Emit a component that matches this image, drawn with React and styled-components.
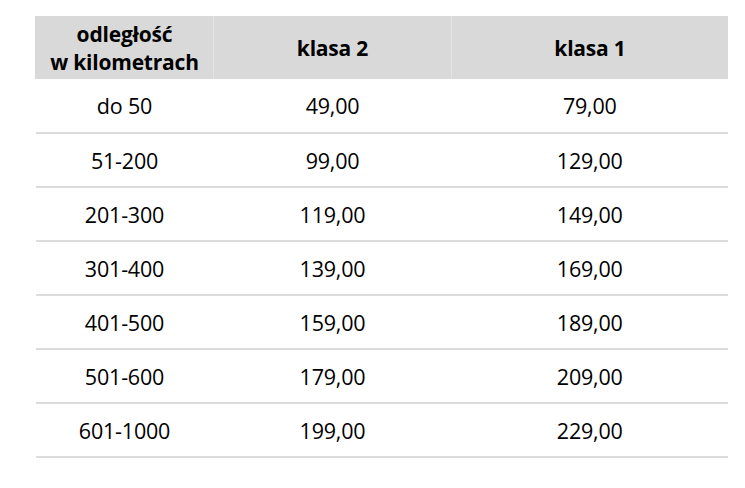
import React from 'react';
import styled, { createGlobalStyle } from 'styled-components';

const GlobalStyle = createGlobalStyle`
  body {
    margin: 0;
    background: #ffffff;
    font-family: "Open Sans", "Noto Sans", sans-serif;
  }
`;

const rows = [
  ['do 50', '49,00', '79,00'],
  ['51-200', '99,00', '129,00'],
  ['201-300', '119,00', '149,00'],
  ['301-400', '139,00', '169,00'],
  ['401-500', '159,00', '189,00'],
  ['501-600', '179,00', '209,00'],
  ['601-1000', '199,00', '229,00'],
];

const Page = styled.div`
  padding: 16px 0 0 35px;
`;

const Table = styled.table`
  width: 690px;
  border-collapse: collapse;
  table-layout: fixed;
  color: #000;
`;

const HeadCell = styled.th`
  width: ${(p) => p.w}px;
  height: 63px;
  padding: 0;
  background: #d9d9d9;
  border-left: 1px solid ${(p) => (p.first ? '#d9d9d9' : '#e4e4e4')};
  font-size: 21px;
  font-weight: 700;
  line-height: 28px;
  letter-spacing: -0.2px;
  text-align: center;
  vertical-align: middle;
`;

const Row = styled.tr`
  height: 54px;
  border-bottom: 2px solid #dcdcdc;
`;

const Cell = styled.td`
  padding: 0;
  font-size: 21.5px;
  letter-spacing: -0.2px;
  text-align: center;
  vertical-align: middle;
`;

export default function App() {
  return (
    <Page>
      <GlobalStyle />
      <Table>
        <thead>
          <tr>
            <HeadCell w={177} first>odległość<br />w kilometrach</HeadCell>
            <HeadCell w={237}>klasa 2</HeadCell>
            <HeadCell w={276}>klasa 1</HeadCell>
          </tr>
        </thead>
        <tbody>
          {rows.map((r) => (
            <Row key={r[0]}>
              {r.map((c, i) => <Cell key={i}>{c}</Cell>)}
            </Row>
          ))}
        </tbody>
      </Table>
    </Page>
  );
}
